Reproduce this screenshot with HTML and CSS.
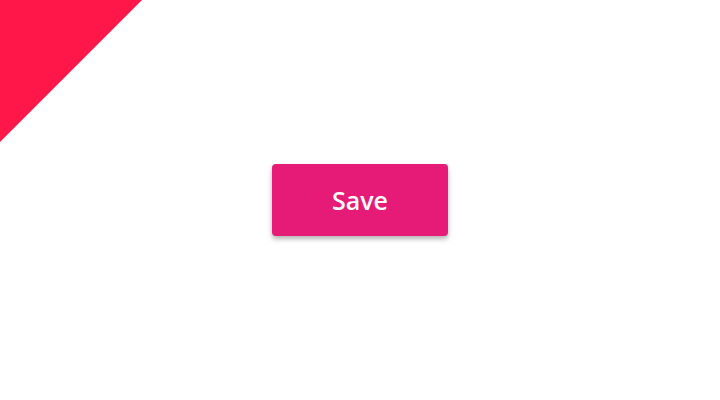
FILE: index.html
```html
<!DOCTYPE html>
<html>
<head>
<meta charset="utf-8">
<link rel="stylesheet" href="styles.css">
</head>
<body>
<div class="corner"></div>
<main class="stage">
  <button class="save-btn">Save</button>
</main>
</body>
</html>
```
FILE: styles.css
```css
html, body {
  margin: 0;
  padding: 0;
  background: #ffffff;
}
body {
  width: 720px;
  height: 400px;
  position: relative;
  overflow: hidden;
}
.corner {
  position: absolute;
  left: 0;
  top: 0;
  width: 142px;
  height: 142px;
  background: #ff1749;
  clip-path: polygon(0 0, 100% 0, 0 100%);
}
.stage {
  height: 400px;
  display: flex;
  align-items: center;
  justify-content: center;
}
.save-btn {
  width: 176px;
  height: 72px;
  border: none;
  border-radius: 4px;
  background: #e61b77;
  color: #ffffff;
  font-family: "Open Sans", sans-serif;
  font-weight: 600;
  font-size: 25px;
  line-height: 1;
  box-shadow: 0 3px 5px rgba(0, 0, 0, 0.3);
  padding: 0;
  cursor: pointer;
}
```
